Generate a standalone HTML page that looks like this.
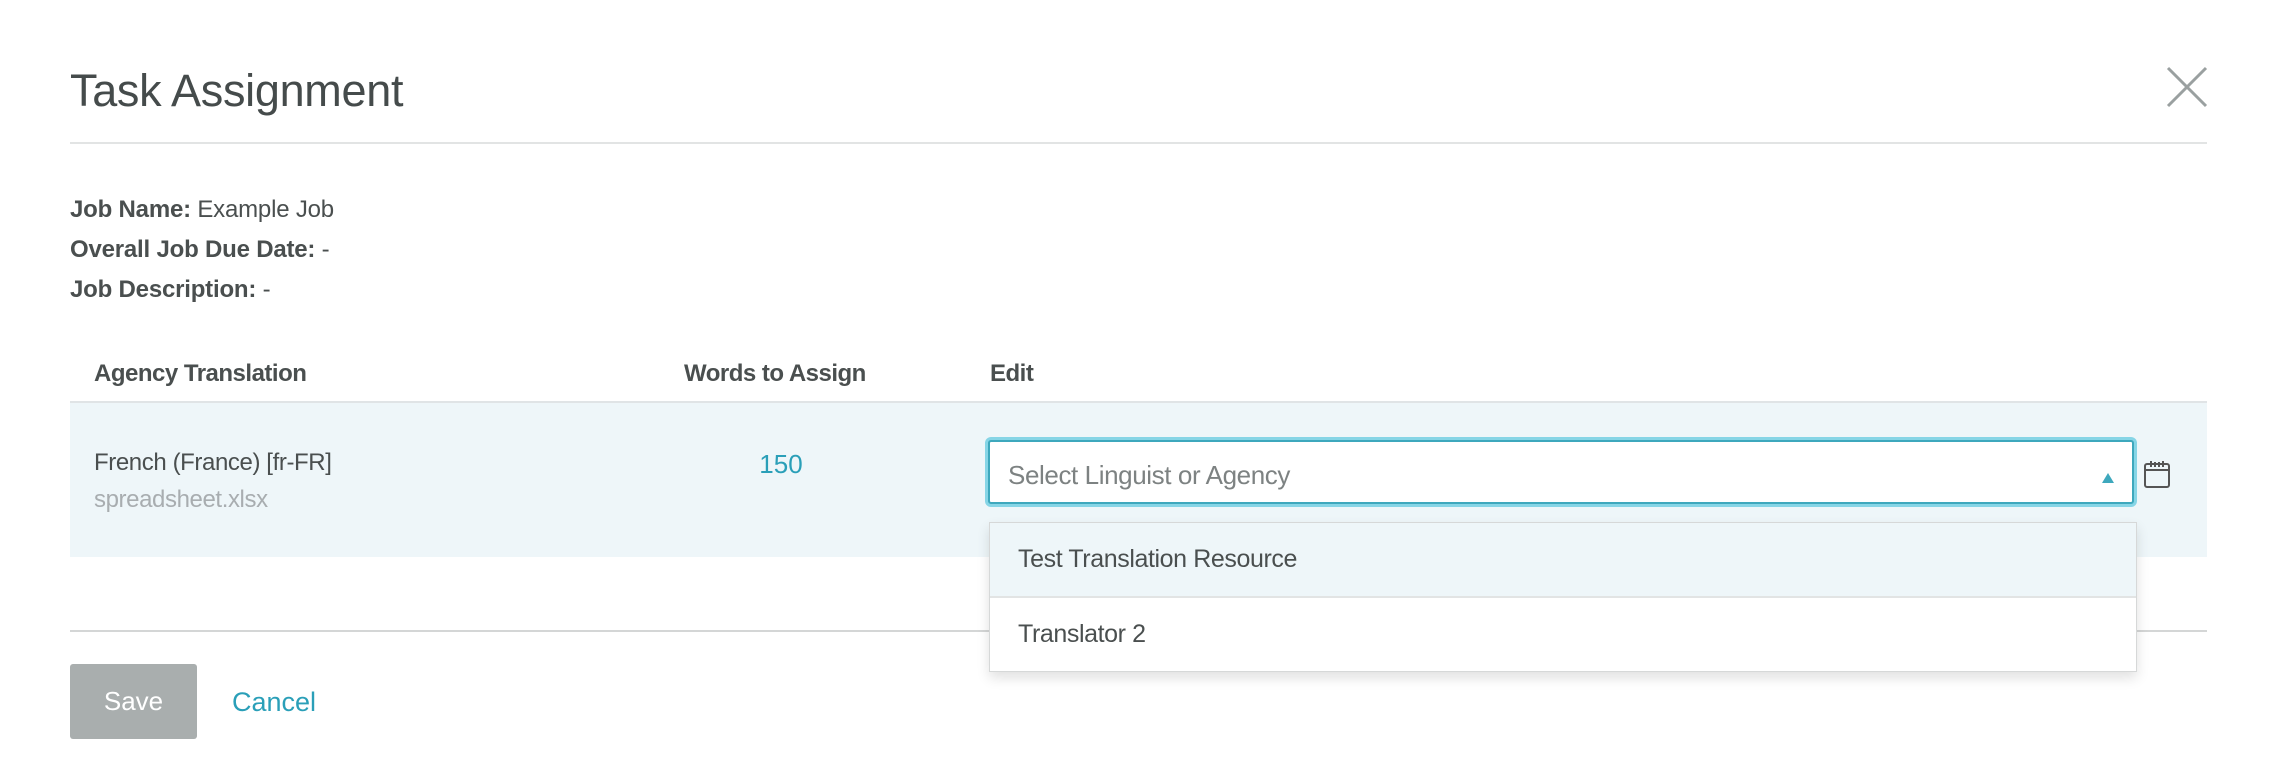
<!DOCTYPE html>
<html><head><meta charset="utf-8"><style>
body{margin:0;width:2273px;height:770px;background:#fff;font-family:"Liberation Sans",sans-serif;color:#4a4f4f;position:relative;overflow:hidden}
.a{position:absolute;white-space:nowrap}
</style></head><body>
<div class="a" style="left:70px;top:65px;font-size:45px;letter-spacing:-0.3px;color:#454b4b">Task Assignment</div>
<svg class="a" style="left:2165px;top:65px" width="44" height="44"><path d="M3 3L41 41M41 3L3 41" stroke="#9aa0a0" stroke-width="3" fill="none"/></svg>
<div class="a" style="left:70px;top:142px;width:2137px;height:2px;background:#e2e4e4"></div>
<div class="a" style="left:70px;top:190px;font-size:24px;line-height:40px;letter-spacing:-0.2px">
<b>Job Name:</b> Example Job<br><b>Overall Job Due Date:</b> -<br><b>Job Description:</b> -</div>
<div class="a" style="left:94px;top:360px;font-size:24px;font-weight:bold;letter-spacing:-0.5px">Agency Translation</div>
<div class="a" style="left:684px;top:360px;font-size:24px;font-weight:bold;letter-spacing:-0.5px">Words to Assign</div>
<div class="a" style="left:990px;top:360px;font-size:24px;font-weight:bold;letter-spacing:-0.5px">Edit</div>
<div class="a" style="left:70px;top:401px;width:2137px;height:154px;background:#eef6f9;border-top:2px solid #e0e4e6"></div>
<div class="a" style="left:94px;top:449px;font-size:24px;letter-spacing:-0.4px">French (France) [fr-FR]</div>
<div class="a" style="left:94px;top:486px;font-size:24px;letter-spacing:-0.4px;color:#a8adb0">spreadsheet.xlsx</div>
<div class="a" style="left:740px;top:449px;width:82px;text-align:center;font-size:26px;color:#2a9fb8">150</div>
<div class="a" style="left:988px;top:440px;width:1146px;height:64px;box-sizing:border-box;border:2px solid #3ea8bd;box-shadow:0 0 0 3px #86d5e6;background:#fff;border-radius:3px"></div>
<div class="a" style="left:1008px;top:460px;font-size:26px;color:#7d8282;letter-spacing:-0.4px">Select Linguist or Agency</div>
<svg class="a" style="left:2101px;top:472px" width="14" height="12"><path d="M7 1L13 11H1Z" fill="#3ea8bd"/></svg>
<svg class="a" style="left:2142px;top:459px" width="30" height="30"><rect x="3" y="5" width="24" height="23" rx="2" fill="none" stroke="#555" stroke-width="2"/><path d="M3 11H27M9 2V8M21 2V8M13 3V8M17 3V8" stroke="#555" stroke-width="2"/></svg>
<div class="a" style="left:70px;top:630px;width:2137px;height:2px;background:#d4d6d6"></div>
<div class="a" style="left:989px;top:522px;width:1148px;height:150px;box-sizing:border-box;border:1px solid #d6d8d8;background:#fff;box-shadow:0 6px 12px rgba(0,0,0,0.12)">
<div style="height:73px;background:#eef6f9;border-bottom:2px solid #e2e4e4;font-size:25px;line-height:73px;padding-left:28px;letter-spacing:-0.4px">Test Translation Resource</div>
<div style="height:73px;font-size:25px;line-height:73px;padding-left:28px;letter-spacing:-0.4px">Translator 2</div>
</div>
<div class="a" style="left:70px;top:664px;width:127px;height:75px;background:#a9aeae;border-radius:3px;color:#fff;font-size:26px;line-height:75px;text-align:center">Save</div>
<div class="a" style="left:232px;top:687px;font-size:27px;color:#2a9fb8">Cancel</div>
</body></html>
